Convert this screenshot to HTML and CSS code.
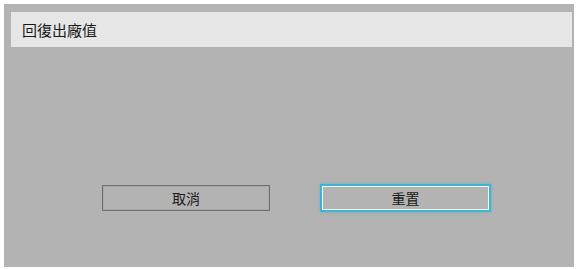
FILE: index.html
```html
<!DOCTYPE html>
<html lang="zh-Hant">
<head>
    <meta charset="UTF-8">
    <meta name="viewport" content="width=device-width, initial-scale=1.0">
    <title>回復出廠值</title>
    <link rel="stylesheet" href="styles.css">
</head>
<body>
    <!-- Reset dialog -->
    <div class="dialog">
        <div class="dialog-title">回復出廠值</div>
        <div class="buttons">
            <button class="btn">取消</button>
            <button class="btn focused">重置</button>
        </div>
    </div>
</body>
</html>
```

FILE: styles.css
```css
body {
    margin: 0;
    background: #fff;
    font-family: "Noto Sans CJK TC", "Noto Sans", sans-serif;
    color: #1a1a1a;
}

.dialog {
    margin: 4px 8px 0 4px;
    height: 263px;
    background: #b3b3b3;
    padding-top: 8px;
    box-sizing: border-box;
}

.dialog-title {
    margin: 0 2px 0 7px;
    height: 35px;
    background: #e6e6e6;
    display: flex;
    align-items: center;
    padding-left: 11px;
    font-size: 15px;
}

.buttons {
    display: flex;
    gap: 50px;
    margin-top: 137px;
    padding-left: 98px;
}

.btn {
    width: 168px;
    height: 26px;
    margin-top: 1px;
    background: transparent;
    border: 1px solid #6e6e6e;
    box-shadow: inset 0 0 0 1px #a8a8a8;
    font-family: inherit;
    font-size: 14px;
    color: #1a1a1a;
    padding: 0;
}

.btn.focused {
    width: 171px;
    height: 28px;
    margin-top: 0;
    border: 2px solid #3cb4d2;
    box-shadow: inset 0 0 0 1px #f2fbff, 0 0 3px rgba(60, 180, 210, 0.6);
}
```
